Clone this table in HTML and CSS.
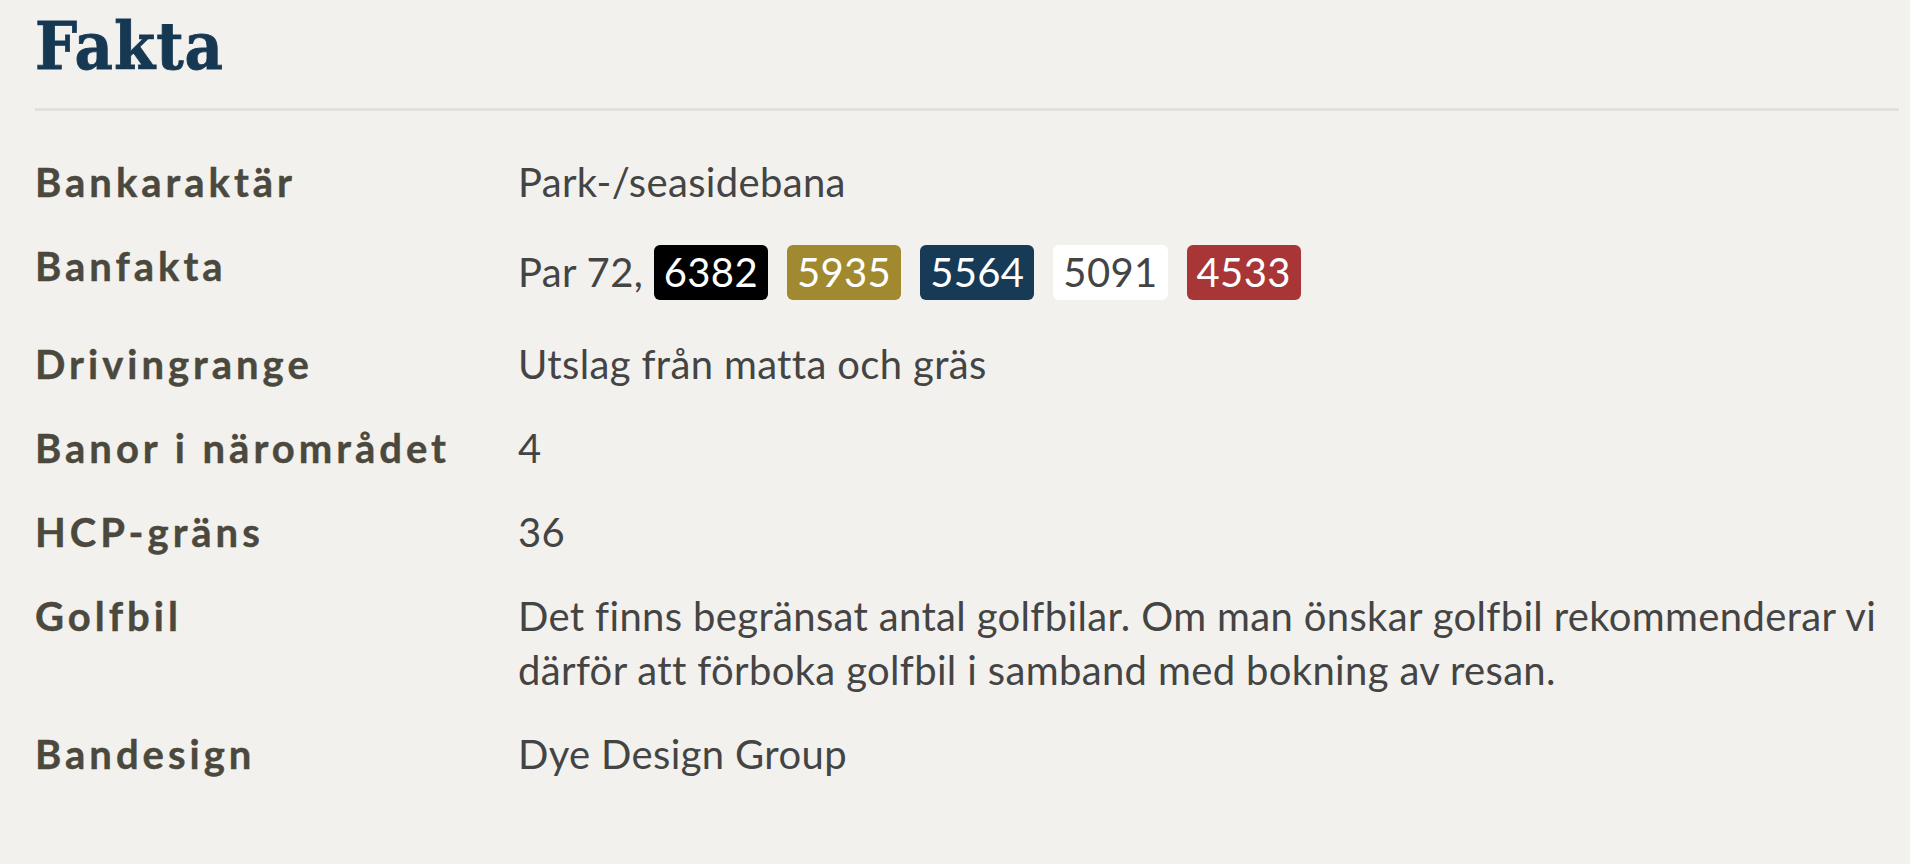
FILE: index.html
```html
<!DOCTYPE html>
<html lang="sv">
<head>
<meta charset="utf-8">
<title>Fakta</title>
<link rel="stylesheet" href="styles.css">
</head>
<body>
<section class="facts">
  <h2 class="facts-title">Fakta</h2>
  <dl class="facts-list">
    <dt class="facts-label">Bankaraktär</dt>
    <dd class="facts-value">Park-/seasidebana</dd>

    <dt class="facts-label">Banfakta</dt>
    <dd class="facts-value facts-value--tees">Par 72, <span class="tee tee--black">6382</span><span class="tee tee--gold">5935</span><span class="tee tee--blue">5564</span><span class="tee tee--white">5091</span><span class="tee tee--red">4533</span></dd>

    <dt class="facts-label">Drivingrange</dt>
    <dd class="facts-value">Utslag från matta och gräs</dd>

    <dt class="facts-label">Banor i närområdet</dt>
    <dd class="facts-value">4</dd>

    <dt class="facts-label">HCP-gräns</dt>
    <dd class="facts-value">36</dd>

    <dt class="facts-label">Golfbil</dt>
    <dd class="facts-value">Det finns begränsat antal golfbilar. Om man önskar golfbil rekommenderar vi därför att förboka golfbil i samband med bokning av resan.</dd>

    <dt class="facts-label">Bandesign</dt>
    <dd class="facts-value">Dye Design Group</dd>
  </dl>
</section>
</body>
</html>
```

FILE: styles.css
```css
html, body {
  background: #f2f1ed;
}
body {
  margin: 8px 11px 0 35px;
  font-family: "Lato", "Liberation Sans", sans-serif;
}
.facts-title {
  margin: 0;
  padding-bottom: 23px;
  border-bottom: 3px solid #e3e1dc;
  font-family: "DejaVu Serif Condensed", "DejaVu Serif", serif;
  font-stretch: condensed;
  font-weight: bold;
  font-size: 66px;
  line-height: 77px;
  letter-spacing: 1px;
  color: #163852;
  -webkit-text-stroke: 0.8px #163852;
}
.facts-list {
  margin: 0;
  padding-top: 44px;
  display: grid;
  grid-template-columns: 483px 1fr;
  row-gap: 30px;
  font-size: 40px;
  line-height: 54px;
}
.facts-label {
  margin: 0;
  font-weight: bold;
  letter-spacing: 4px;
  color: #4b483d;
  -webkit-text-stroke: 0.4px #4b483d;
}
.facts-value {
  margin: 0;
  letter-spacing: 0.35px;
  color: #444444;
}
.tee {
  display: inline-block;
  padding: 3px 10px;
  line-height: 49px;
  border-radius: 6px;
  margin: 6px 0 7px 19px;
  color: #ffffff;
}
.tee--black {
  margin-left: 0;
  background: #000000;
}
.tee--gold { background: #a0892e; }
.tee--blue { background: #173a56; }
.tee--white { background: #ffffff; color: #444444; }
.tee--red { background: #a93636; }
```
